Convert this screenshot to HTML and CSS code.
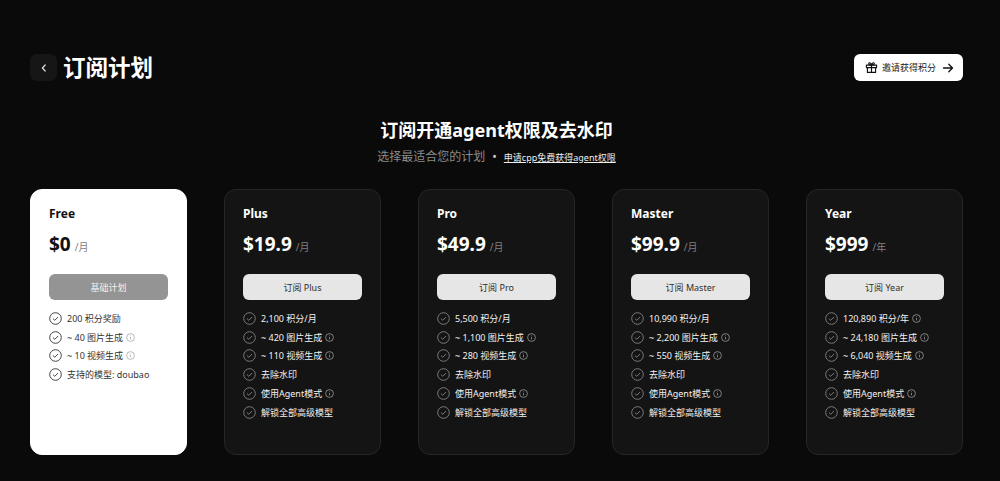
FILE: index.html

```html
<!DOCTYPE html>
<html>
	<head>
		<title>订阅计划</title>
		<meta charset="UTF-8">
		<link rel="stylesheet" href="styles.css">
	</head>
	<body>
		<svg class="defs" width="0" height="0">
			<symbol id="check" viewBox="0 0 13 13">
				<circle cx="6.5" cy="6.5" r="5.8" fill="none" stroke="currentColor" stroke-width="1"/>
				<path d="M4.2 6.8l1.6 1.5 3-3" fill="none" stroke="currentColor" stroke-width="1" stroke-linecap="round" stroke-linejoin="round"/>
			</symbol>
			<symbol id="info" viewBox="0 0 9 9">
				<circle cx="4.5" cy="4.5" r="3.9" fill="none" stroke="currentColor" stroke-width="0.8"/>
				<path d="M4.5 4v2.3M4.5 2.5v.7" fill="none" stroke="currentColor" stroke-width="0.8"/>
			</symbol>
		</svg>
		<div id="wrapper">
			<div class="topbar">
				<div class="title-wrap">
					<button class="back">
						<svg width="10" height="10" viewBox="0 0 10 10"><path d="M6.2 2L3.4 5l2.8 3" fill="none" stroke="#ddd" stroke-width="1.2" stroke-linecap="round" stroke-linejoin="round"/></svg>
					</button>
					<h1>订阅计划</h1>
				</div>
				<button class="invite">
					<svg width="13" height="13" viewBox="0 0 14 14" fill="none" stroke="#111" stroke-width="1.2" stroke-linejoin="round"><rect x="1.5" y="4.5" width="11" height="2.6"/><path d="M2.6 7.1v5.2h8.8V7.1M7 4.5v7.8M7 4.5C5.6 4.5 4 4 4 2.8 4 1.4 6.4 1.4 7 4.5zM7 4.5c1.4 0 3-.5 3-1.7 0-1.4-2.4-1.4-3 1.7z"/></svg>
					<span>邀请获得积分</span>
					<svg class="arrow" width="12" height="12" viewBox="0 0 12 12" fill="none" stroke="#111" stroke-width="1.3" stroke-linecap="round" stroke-linejoin="round"><path d="M1.5 6h9M6.8 2.2L10.5 6l-3.7 3.8"/></svg>
				</button>
			</div>

			<div class="heading">
				<h2>订阅开通agent权限及去水印</h2>
				<p>选择最适合您的计划<span class="dot">•</span><a href="#">申请cpp免费获得agent权限</a></p>
			</div>

			<div class="plans">
				<div class="card light">
					<h3>Free</h3>
					<div class="price"><b>$0</b><span>/月</span></div>
					<button class="sub base">基础计划</button>
					<ul>
						<li><svg class="ok"><use href="#check"/></svg>200 积分奖励</li>
						<li><svg class="ok"><use href="#check"/></svg>~ 40 图片生成<svg class="i"><use href="#info"/></svg></li>
						<li><svg class="ok"><use href="#check"/></svg>~ 10 视频生成<svg class="i"><use href="#info"/></svg></li>
						<li><svg class="ok"><use href="#check"/></svg>支持的模型: doubao</li>
					</ul>
				</div>
				<div class="card">
					<h3>Plus</h3>
					<div class="price"><b>$19.9</b><span>/月</span></div>
					<button class="sub">订阅 Plus</button>
					<ul>
						<li><svg class="ok"><use href="#check"/></svg>2,100 积分/月</li>
						<li><svg class="ok"><use href="#check"/></svg>~ 420 图片生成<svg class="i"><use href="#info"/></svg></li>
						<li><svg class="ok"><use href="#check"/></svg>~ 110 视频生成<svg class="i"><use href="#info"/></svg></li>
						<li><svg class="ok"><use href="#check"/></svg>去除水印</li>
						<li><svg class="ok"><use href="#check"/></svg>使用Agent模式<svg class="i"><use href="#info"/></svg></li>
						<li><svg class="ok"><use href="#check"/></svg>解锁全部高级模型</li>
					</ul>
				</div>
				<div class="card">
					<h3>Pro</h3>
					<div class="price"><b>$49.9</b><span>/月</span></div>
					<button class="sub">订阅 Pro</button>
					<ul>
						<li><svg class="ok"><use href="#check"/></svg>5,500 积分/月</li>
						<li><svg class="ok"><use href="#check"/></svg>~ 1,100 图片生成<svg class="i"><use href="#info"/></svg></li>
						<li><svg class="ok"><use href="#check"/></svg>~ 280 视频生成<svg class="i"><use href="#info"/></svg></li>
						<li><svg class="ok"><use href="#check"/></svg>去除水印</li>
						<li><svg class="ok"><use href="#check"/></svg>使用Agent模式<svg class="i"><use href="#info"/></svg></li>
						<li><svg class="ok"><use href="#check"/></svg>解锁全部高级模型</li>
					</ul>
				</div>
				<div class="card">
					<h3>Master</h3>
					<div class="price"><b>$99.9</b><span>/月</span></div>
					<button class="sub">订阅 Master</button>
					<ul>
						<li><svg class="ok"><use href="#check"/></svg>10,990 积分/月</li>
						<li><svg class="ok"><use href="#check"/></svg>~ 2,200 图片生成<svg class="i"><use href="#info"/></svg></li>
						<li><svg class="ok"><use href="#check"/></svg>~ 550 视频生成<svg class="i"><use href="#info"/></svg></li>
						<li><svg class="ok"><use href="#check"/></svg>去除水印</li>
						<li><svg class="ok"><use href="#check"/></svg>使用Agent模式<svg class="i"><use href="#info"/></svg></li>
						<li><svg class="ok"><use href="#check"/></svg>解锁全部高级模型</li>
					</ul>
				</div>
				<div class="card">
					<h3>Year</h3>
					<div class="price"><b>$999</b><span>/年</span></div>
					<button class="sub">订阅 Year</button>
					<ul>
						<li><svg class="ok"><use href="#check"/></svg>120,890 积分/年<svg class="i"><use href="#info"/></svg></li>
						<li><svg class="ok"><use href="#check"/></svg>~ 24,180 图片生成<svg class="i"><use href="#info"/></svg></li>
						<li><svg class="ok"><use href="#check"/></svg>~ 6,040 视频生成<svg class="i"><use href="#info"/></svg></li>
						<li><svg class="ok"><use href="#check"/></svg>去除水印</li>
						<li><svg class="ok"><use href="#check"/></svg>使用Agent模式<svg class="i"><use href="#info"/></svg></li>
						<li><svg class="ok"><use href="#check"/></svg>解锁全部高级模型</li>
					</ul>
				</div>
			</div>
		</div>
	</body>
</html>
```

FILE: styles.css

```css
/* common */
* {
	box-sizing: border-box; margin: 0; padding: 0;
}
html, body {
	height: 100%; background-color: #0A0A0A; overflow: hidden;
}
body {
	font-family: "Noto Sans", "Noto Sans CJK SC", sans-serif; color: #FFF;
}
button {
	font-family: inherit; border: none; cursor: pointer;
}
.defs {
	display: block; height: 0;
}
#wrapper {
	padding: 54px 37px 0 30px;
}
/* top */
.topbar {
	display: flex; justify-content: space-between; align-items: flex-start; height: 27px;
}
.title-wrap {
	display: flex; align-items: center; gap: 6px;
}
.back {
	display: flex; align-items: center; justify-content: center; width: 27px; height: 27px; border-radius: 7px; background-color: #161616;
}
h1 {
	font-size: 22.5px; line-height: 27px; font-weight: 700;
}
.invite {
	display: flex; align-items: center; width: 109px; height: 27px; padding: 0 0 0 11px; border-radius: 6px; background-color: #FFF; color: #222; font-size: 9px; white-space: nowrap;
}
.invite span {
	margin-left: 4px;
}
.invite .arrow {
	margin-left: 6px;
}
/* heading */
.heading {
	text-align: center; margin-top: 36px; height: 72px;
}
h2 {
	font-size: 18px; line-height: 26px; font-weight: 700;
}
.heading p {
	margin-top: 5px; font-size: 12px; line-height: 18px; color: #8A8A8A;
}
.dot {
	margin: 0 7px; color: #CCC;
}
.heading a {
	font-size: 9px; color: #F0F0F0;
}
/* plans */
.plans {
	display: grid; grid-template-columns: repeat(5, 157px); justify-content: space-between;
}
.card {
	height: 266px; padding: 15px 18px 0 18px; border-radius: 12px; background-color: #141414; border: 1px solid #262626;
}
.card.light {
	background-color: #FFF; border-color: #FFF; color: #111;
}
h3 {
	font-size: 12px; line-height: 17px; font-weight: 700;
}
.price {
	margin-top: 8px; height: 28px; display: flex; align-items: baseline;
}
.price b {
	font-size: 19px; line-height: 28px; font-weight: 700;
}
.price span {
	margin-left: 4px; font-size: 10px; color: #808080;
}
.sub {
	display: block; width: 119px; height: 26px; margin-top: 16px; border-radius: 6px; background-color: #E6E6E6; color: #2E2E2E; font-size: 9px;
}
.sub.base {
	background-color: #949494; color: #F2F2F2;
}
ul {
	list-style: none; margin-top: 9px;
}
li {
	display: flex; align-items: center; height: 18.8px; font-size: 9px; color: #F2F2F2; white-space: nowrap;
}
.light li {
	color: #333;
}
.ok {
	width: 13px; height: 13px; margin-right: 5px; color: #7A7A7A;
}
.light .ok {
	color: #444;
}
.i {
	width: 9px; height: 9px; margin-left: 3px; color: #999;
}
.light .i {
	color: #AAA;
}
```
